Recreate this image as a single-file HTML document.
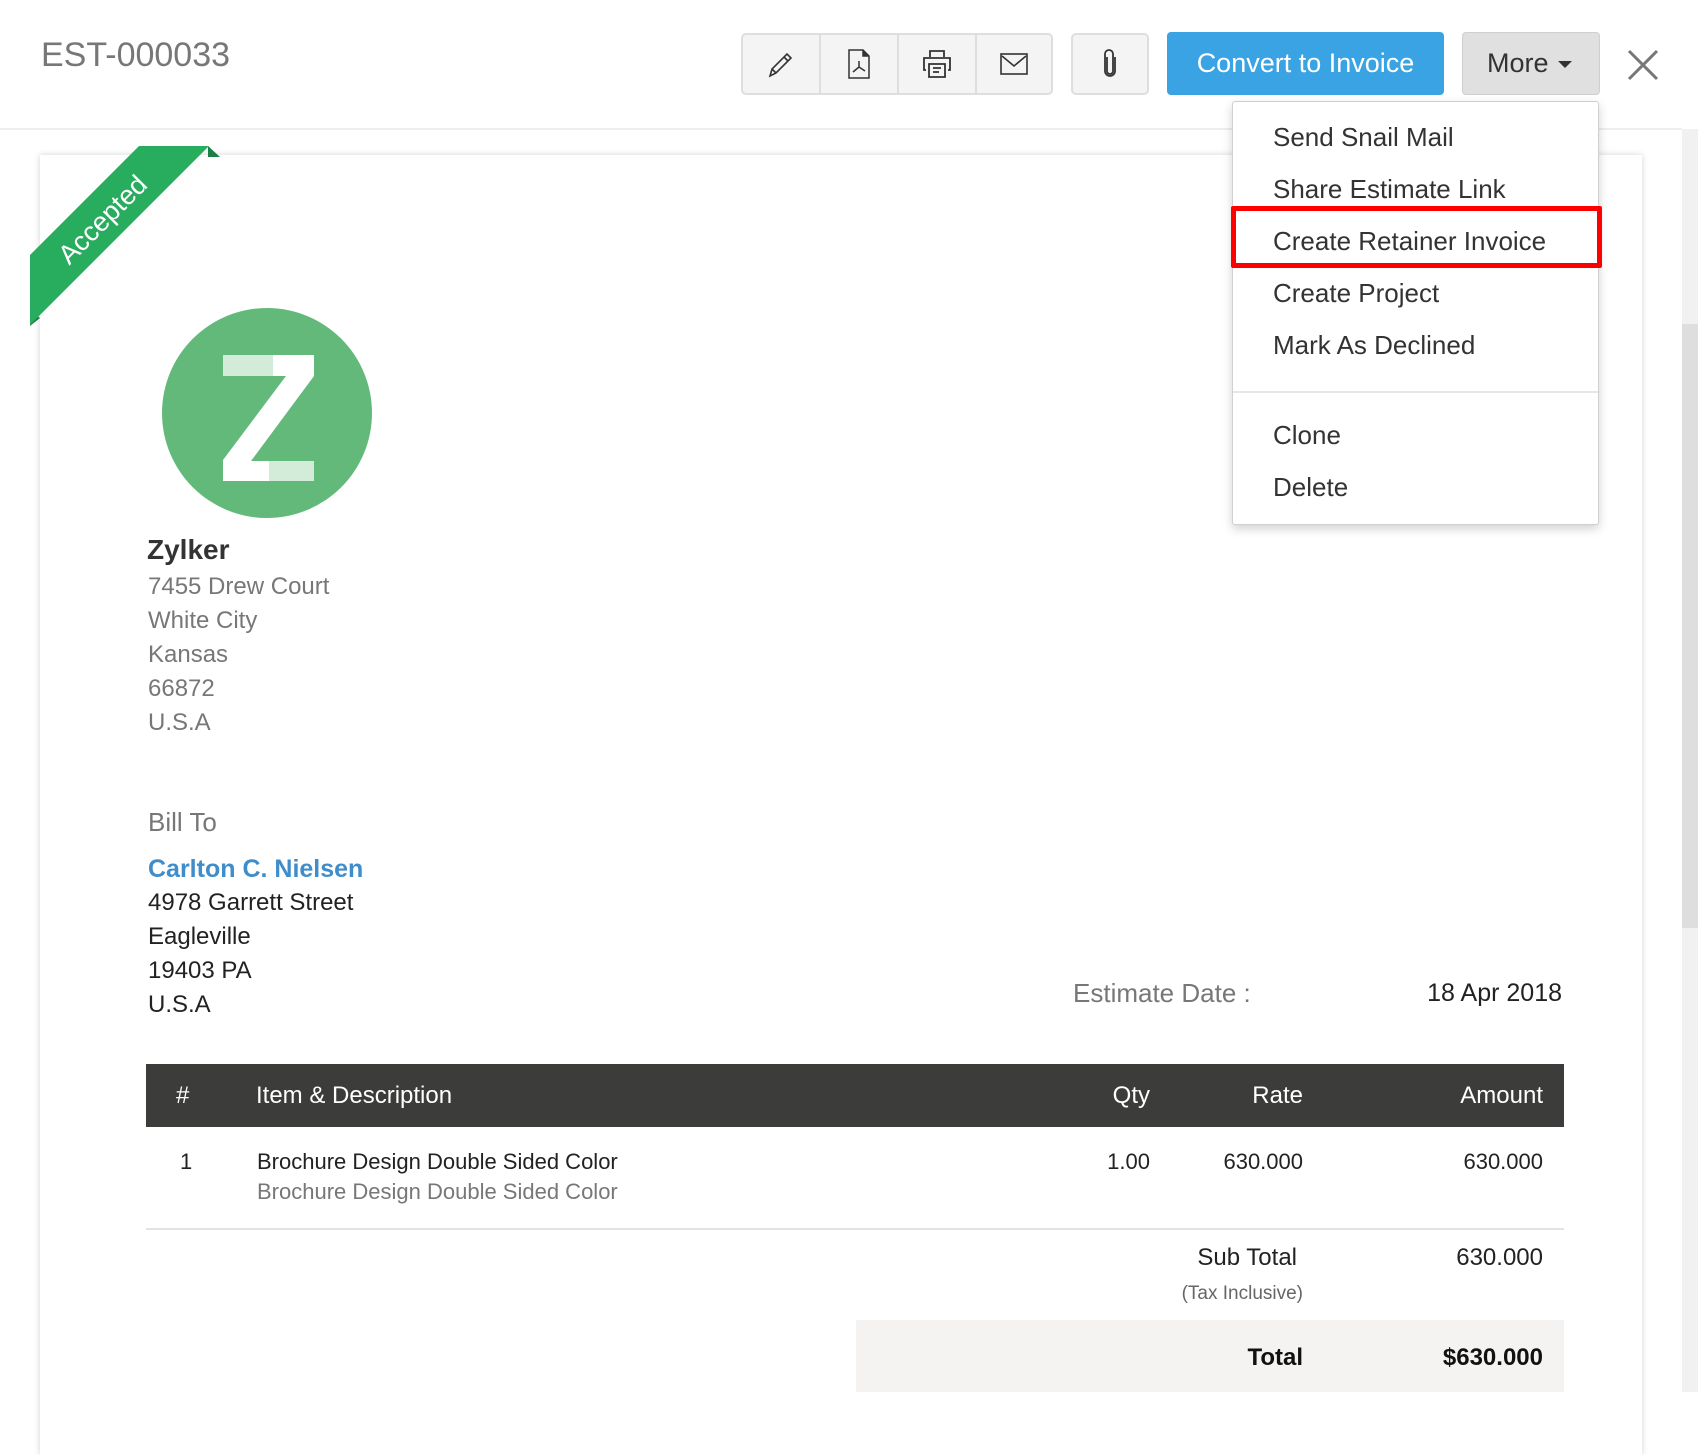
<!DOCTYPE html>
<html><head><meta charset="utf-8"><style>
*{margin:0;padding:0;box-sizing:border-box}
body{width:1698px;height:1392px;overflow:hidden;background:#fff;font-family:"Liberation Sans",sans-serif;position:relative}
.a{position:absolute;white-space:nowrap}
.btn{position:absolute;top:33px;height:62px;background:#f4f4f4;border:2px solid #dedede;border-radius:5px}
.ic{position:absolute;top:0;height:58px;width:78px;display:flex;align-items:center;justify-content:center}
.dd div{position:absolute;left:40px;font-size:26px;color:#333;line-height:30px}
.r{text-align:right}
</style></head><body>
<div class="a" style="left:41px;top:35px;font-size:34px;color:#777;line-height:40px">EST-000033</div>
<div class="a" style="left:0;top:128px;width:1682px;height:2px;background:#eee"></div>

<!-- toolbar -->
<div class="btn" style="left:741px;width:312px">
 <div class="ic" style="left:0;border-right:2px solid #dedede"><svg width="30" height="30" viewBox="0 0 30 30" fill="none" stroke="#333" stroke-width="1.6"><path d="M4 27l2-7L21 5l4 4L10 24z M18 8l4 4 M6 20l4 4"/></svg></div>
 <div class="ic" style="left:78px;border-right:2px solid #dedede"><svg width="26" height="32" viewBox="0 0 26 32" fill="none" stroke="#333" stroke-width="1.5"><path d="M3 2h14l6 6v22H3z"/><path d="M17 2v6h6" fill="#333"/><path d="M13 13v6l-6 5 M13 19l6 4"/></svg></div>
 <div class="ic" style="left:156px;border-right:2px solid #dedede"><svg width="32" height="32" viewBox="0 0 32 32" fill="none" stroke="#333" stroke-width="1.8"><path d="M9 9V3h14v6 M5 22H3V10h26v12h-2 M8 16h16v13H8z M12 20h8 M12 24h6"/></svg></div>
 <div class="ic" style="left:234px;width:74px"><svg width="30" height="24" viewBox="0 0 30 24" fill="none" stroke="#333" stroke-width="1.6"><rect x="2" y="2" width="26" height="20"/><path d="M3 4l12 10L27 4"/></svg></div>
</div>
<div class="btn" style="left:1071px;width:78px"><div class="ic" style="left:0;width:74px"><svg width="16" height="30" viewBox="0 0 16 30" fill="none" stroke="#333" stroke-width="1.8"><path d="M5 8v14a3 3 0 006 0V5a4 4 0 00-8 0v17a5 5 0 0010 0V8"/></svg></div></div>
<div class="a" style="left:1167px;top:32px;width:277px;height:63px;background:#3aa3e3;border-radius:4px;color:#fff;font-size:27px;line-height:63px;text-align:center">Convert to Invoice</div>
<div class="a" style="left:1462px;top:32px;width:138px;height:63px;background:#e0e0e0;border:1px solid #cfcfcf;border-radius:4px;color:#333;font-size:27px;line-height:61px;padding-left:24px">More <span style="display:inline-block;width:0;height:0;border-left:7px solid transparent;border-right:7px solid transparent;border-top:7px solid #333;vertical-align:middle;margin-left:2px"></span></div>
<svg class="a" style="left:1626px;top:48px" width="34" height="34" viewBox="0 0 34 34" stroke="#777" stroke-width="3"><path d="M3 3l28 28M31 3L3 31"/></svg>

<!-- scrollbar -->
<div class="a" style="left:1682px;top:129px;width:16px;height:1263px;background:#f1f1f1"></div>
<div class="a" style="left:1682px;top:324px;width:16px;height:604px;background:#dedede"></div>

<!-- paper -->
<div class="a" style="left:40px;top:155px;width:1602px;height:1300px;background:#fff;box-shadow:0 0 6px rgba(0,0,0,.18)"></div>

<!-- ribbon -->
<svg class="a" style="left:28px;top:144px" width="200" height="200" viewBox="0 0 200 200">
<path d="M180 2l12 11h-12z M2 166v16l10-8z" fill="#1c7f45"/>
<path d="M111 2h70L2 181v-70z" fill="#28ad5f"/>
<text x="0" y="0" fill="#fff" font-size="27" text-anchor="middle" font-family="Liberation Sans,sans-serif" transform="translate(81,82) rotate(-45)">Accepted</text>
</svg>

<!-- logo -->
<svg class="a" style="left:161px;top:307px" width="212" height="212" viewBox="0 0 212 212">
<circle cx="106" cy="106" r="105" fill="#63b97a"/>
<path d="M62 48h91v21L90 154h63v20H62v-21l63-84H62z" fill="#fff"/>
<path d="M62 48h50v21H62z M108 154h45v20h-45z" fill="#cbe7d2" opacity=".85"/>
</svg>

<div class="a" style="left:147px;top:533px;font-size:28px;font-weight:bold;color:#333;line-height:34px">Zylker</div>
<div class="a" style="left:148px;top:570px;font-size:24px;color:#777;line-height:34px">7455 Drew Court<br>White City<br>Kansas<br>66872<br>U.S.A</div>
<div class="a" style="left:148px;top:805px;font-size:26px;color:#777;line-height:34px">Bill To</div>
<div class="a" style="left:148px;top:852px;font-size:25px;font-weight:bold;color:#408dcb;line-height:34px">Carlton C. Nielsen</div>
<div class="a" style="left:148px;top:886px;font-size:24px;color:#222;line-height:34px">4978 Garrett Street<br>Eagleville<br>19403 PA<br>U.S.A</div>
<div class="a" style="left:1073px;top:976px;font-size:26px;color:#777;line-height:34px">Estimate Date :</div>
<div class="a r" style="left:1360px;width:202px;top:976px;font-size:25px;color:#222;line-height:34px">18 Apr 2018</div>

<!-- table -->
<div class="a" style="left:146px;top:1064px;width:1418px;height:63px;background:#3c3c3b"></div>
<div class="a" style="left:176px;top:1064px;line-height:63px;font-size:24px;color:#fff">#</div>
<div class="a" style="left:256px;top:1064px;line-height:63px;font-size:24px;color:#fff">Item &amp; Description</div>
<div class="a r" style="left:1000px;width:150px;top:1064px;line-height:63px;font-size:24px;color:#fff">Qty</div>
<div class="a r" style="left:1150px;width:153px;top:1064px;line-height:63px;font-size:24px;color:#fff">Rate</div>
<div class="a r" style="left:1343px;width:200px;top:1064px;line-height:63px;font-size:24px;color:#fff">Amount</div>
<div class="a" style="left:180px;top:1147px;font-size:22px;color:#222;line-height:30px">1</div>
<div class="a" style="left:257px;top:1147px;font-size:22px;color:#222;line-height:30px">Brochure Design Double Sided Color</div>
<div class="a" style="left:257px;top:1177px;font-size:22px;color:#777;line-height:30px">Brochure Design Double Sided Color</div>
<div class="a r" style="left:1000px;width:150px;top:1147px;font-size:22px;color:#222;line-height:30px">1.00</div>
<div class="a r" style="left:1150px;width:153px;top:1147px;font-size:22px;color:#222;line-height:30px">630.000</div>
<div class="a r" style="left:1343px;width:200px;top:1147px;font-size:22px;color:#222;line-height:30px">630.000</div>
<div class="a" style="left:146px;top:1228px;width:1418px;height:2px;background:#e3e3e3"></div>
<div class="a r" style="left:1100px;width:197px;top:1243px;font-size:24px;color:#222;line-height:30px">Sub Total</div>
<div class="a r" style="left:1343px;width:200px;top:1243px;font-size:24px;color:#222;line-height:30px">630.000</div>
<div class="a r" style="left:1100px;width:203px;top:1281px;font-size:19px;color:#666;line-height:26px">(Tax Inclusive)</div>
<div class="a" style="left:856px;top:1320px;width:708px;height:72px;background:#f4f3f2"></div>
<div class="a r" style="left:1100px;width:203px;top:1343px;font-size:24px;font-weight:bold;color:#111;line-height:30px">Total</div>
<div class="a r" style="left:1343px;width:200px;top:1343px;font-size:24px;font-weight:bold;color:#111;line-height:30px">$630.000</div>

<!-- dropdown -->
<div class="a dd" style="left:1232px;top:101px;width:367px;height:424px;background:#fff;border:1px solid #d0d0d0;border-radius:3px;box-shadow:0 4px 10px rgba(0,0,0,.18)">
 <div style="top:20px">Send Snail Mail</div>
 <div style="top:72px">Share Estimate Link</div>
 <div style="top:124px">Create Retainer Invoice</div>
 <div style="top:176px">Create Project</div>
 <div style="top:228px">Mark As Declined</div>
 <div style="left:0;top:289px;width:365px;height:2px;background:#e6e6e6"></div>
 <div style="top:318px">Clone</div>
 <div style="top:370px">Delete</div>
</div>
<div class="a" style="left:1231px;top:206px;width:371px;height:62px;border:5px solid #f00;border-radius:2px"></div>
</body></html>
